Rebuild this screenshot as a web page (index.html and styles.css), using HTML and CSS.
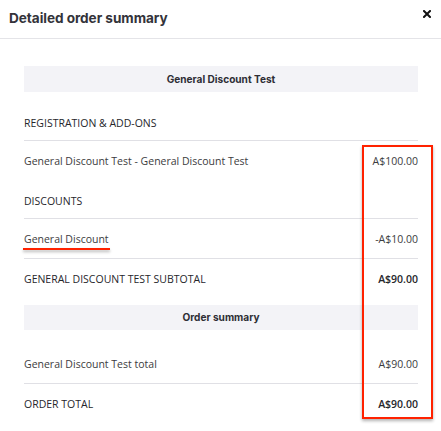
FILE: index.html
```html
<!DOCTYPE html>
<html>
<head>
<meta charset="utf-8">
<link rel="stylesheet" href="styles.css">
</head>
<body>
<div class="modal">
  <div class="header">
    <h1 class="title">Detailed order summary</h1>
    <svg class="close" width="8" height="8" viewBox="0 0 8 8"><path d="M1 1L7 7M7 1L1 7" stroke="#111" stroke-width="2" stroke-linecap="square"/></svg>
  </div>
  <div class="content">
    <div class="band band-first">General Discount Test</div>
    <div class="row sec line">REGISTRATION &amp; ADD-ONS</div>
    <div class="row item"><span>General Discount Test - General Discount Test</span><span>A$100.00</span></div>
    <div class="row sec line">DISCOUNTS</div>
    <div class="row item line"><span>General Discount</span><span>-A$10.00</span></div>
    <div class="row item strong"><span>GENERAL DISCOUNT TEST SUBTOTAL</span><span class="b">A$90.00</span></div>
    <div class="band band-second">Order summary</div>
    <div class="row item line spaced"><span>General Discount Test total</span><span>A$90.00</span></div>
    <div class="row item strong"><span>ORDER TOTAL</span><span class="b">A$90.00</span></div>
  </div>
  <div class="mark-box"></div>
  <div class="mark-line"></div>
</div>
</body>
</html>
```
FILE: styles.css
```css
html, body {
  margin: 0;
  padding: 0;
  background: #fff;
}
body {
  font-family: "Open Sans", "Liberation Sans", sans-serif;
  color: #3c3c40;
}
.modal {
  position: relative;
  width: 441px;
  height: 431px;
  overflow: hidden;
}
.header {
  height: 38px;
  border-bottom: 1px solid #e4e4e8;
  display: flex;
  justify-content: space-between;
  align-items: flex-start;
  padding: 0 10px 0 9px;
}
.title {
  margin: 0;
  margin-top: 9px;
  font-family: "Inter", "Open Sans", sans-serif;
  font-weight: 700;
  font-size: 13.6px;
  line-height: 18px;
  color: #33333a;
  letter-spacing: -0.05px;
}
.close {
  margin-top: 10px;
}
.content {
  padding: 0 23px 0 24px;
}
.band {
  background: #f3f3f7;
  text-align: center;
  font-family: "Inter", "Open Sans", sans-serif;
  font-weight: 700;
  font-size: 10.1px;
  color: #2e2e35;
}
.band-first {
  margin-top: 27px;
  height: 26px;
  line-height: 26px;
}
.band-second {
  margin-top: 6px;
  height: 25px;
  line-height: 25px;
}
.row {
  display: flex;
  justify-content: space-between;
  font-size: 10.5px;
}
.row.line {
  border-bottom: 1px solid #e0e0e5;
}
.sec {
  height: 38px;
  box-sizing: border-box;
  align-items: flex-end;
  padding-bottom: 10px;
  line-height: 14px;
  color: #26262b;
}
.band + .sec {
  margin-top: 11px;
}
.item {
  height: 40px;
  box-sizing: border-box;
  align-items: center;
  line-height: 14px;
}
.item.spaced {
  margin-top: 14px;
}
.strong {
  color: #26262b;
}
.b {
  font-weight: 600;
}
.mark-box {
  position: absolute;
  left: 362px;
  top: 145px;
  width: 67px;
  height: 270px;
  border: 2px solid #ff2200;
  box-shadow: 0 2px 3px rgba(0,0,0,0.3);
}
.mark-line {
  position: absolute;
  left: 23px;
  top: 248px;
  width: 87px;
  height: 2px;
  background: #ff2200;
  box-shadow: 0 2px 3px rgba(0,0,0,0.3);
}
```
